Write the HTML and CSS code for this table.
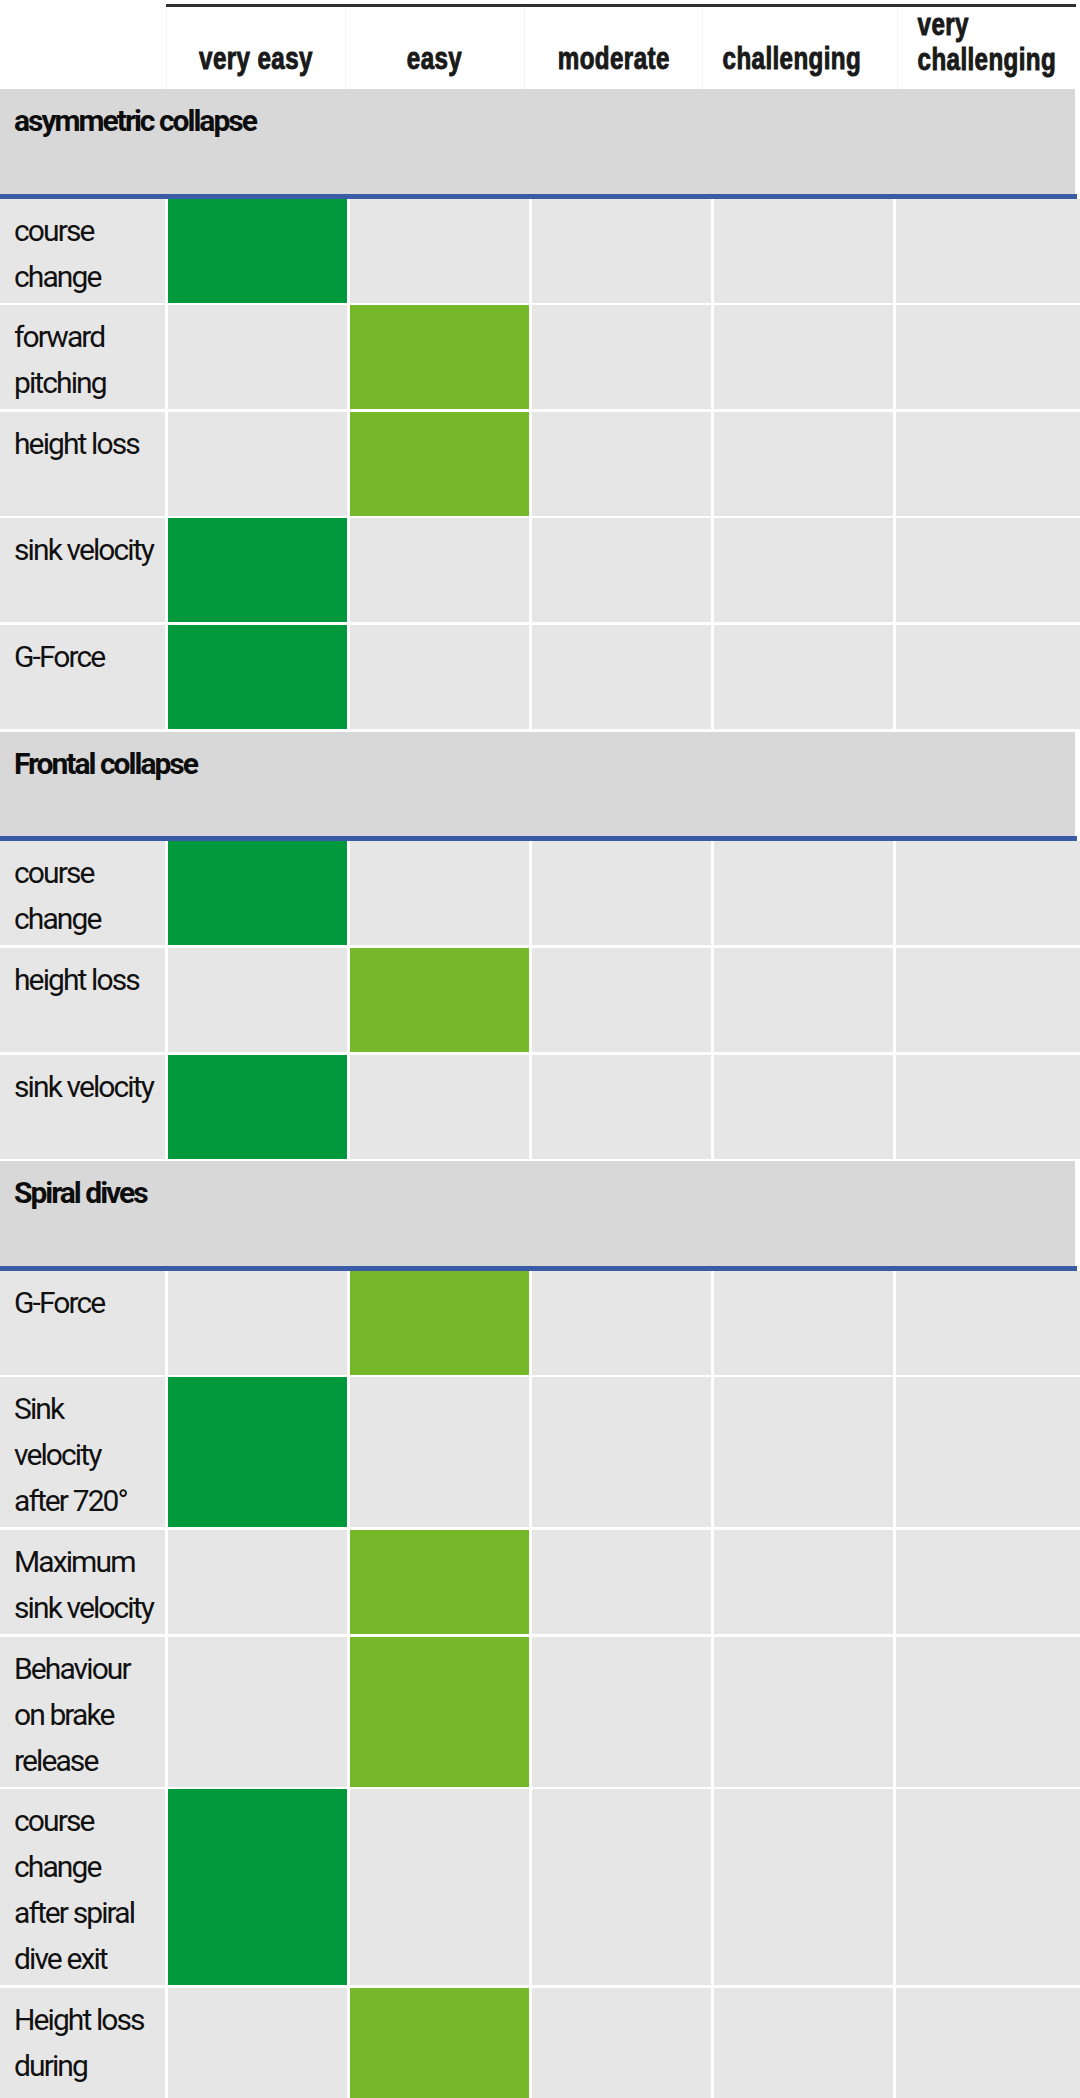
FILE: index.html
```html
<!DOCTYPE html>
<html lang="en">
<head>
<meta charset="utf-8">
<title>Safety rating</title>
<link rel="stylesheet" href="styles.css">
</head>
<body>
<div class="chart">
  <div class="head">
    <div class="head-spacer"></div>
    <div class="head-cols">
      <div class="head-cell"><span class="head-text">very easy</span></div>
      <div class="head-cell"><span class="head-text">easy</span></div>
      <div class="head-cell"><span class="head-text">moderate</span></div>
      <div class="head-cell head-cell-shift"><span class="head-text">challenging</span></div>
      <div class="head-cell head-cell-two"><span class="head-text">very<br>challenging</span></div>
    </div>
  </div>

  <section class="group">
    <div class="group-title">asymmetric collapse</div>
    <div class="rows">
      <div class="row"><div class="label">course<br>change</div><div class="cell lvl-1"></div><div class="cell"></div><div class="cell"></div><div class="cell"></div><div class="cell"></div></div>
      <div class="row"><div class="label">forward<br>pitching</div><div class="cell"></div><div class="cell lvl-2"></div><div class="cell"></div><div class="cell"></div><div class="cell"></div></div>
      <div class="row"><div class="label">height loss</div><div class="cell"></div><div class="cell lvl-2"></div><div class="cell"></div><div class="cell"></div><div class="cell"></div></div>
      <div class="row"><div class="label">sink velocity</div><div class="cell lvl-1"></div><div class="cell"></div><div class="cell"></div><div class="cell"></div><div class="cell"></div></div>
      <div class="row"><div class="label">G-Force</div><div class="cell lvl-1"></div><div class="cell"></div><div class="cell"></div><div class="cell"></div><div class="cell"></div></div>
    </div>
  </section>

  <section class="group">
    <div class="group-title">Frontal collapse</div>
    <div class="rows">
      <div class="row"><div class="label">course<br>change</div><div class="cell lvl-1"></div><div class="cell"></div><div class="cell"></div><div class="cell"></div><div class="cell"></div></div>
      <div class="row"><div class="label">height loss</div><div class="cell"></div><div class="cell lvl-2"></div><div class="cell"></div><div class="cell"></div><div class="cell"></div></div>
      <div class="row"><div class="label">sink velocity</div><div class="cell lvl-1"></div><div class="cell"></div><div class="cell"></div><div class="cell"></div><div class="cell"></div></div>
    </div>
  </section>

  <section class="group">
    <div class="group-title">Spiral dives</div>
    <div class="rows">
      <div class="row"><div class="label">G-Force</div><div class="cell"></div><div class="cell lvl-2"></div><div class="cell"></div><div class="cell"></div><div class="cell"></div></div>
      <div class="row"><div class="label">Sink<br>velocity<br>after 720°</div><div class="cell lvl-1"></div><div class="cell"></div><div class="cell"></div><div class="cell"></div><div class="cell"></div></div>
      <div class="row"><div class="label">Maximum<br>sink velocity</div><div class="cell"></div><div class="cell lvl-2"></div><div class="cell"></div><div class="cell"></div><div class="cell"></div></div>
      <div class="row"><div class="label">Behaviour<br>on brake<br>release</div><div class="cell"></div><div class="cell lvl-2"></div><div class="cell"></div><div class="cell"></div><div class="cell"></div></div>
      <div class="row"><div class="label">course<br>change<br>after spiral<br>dive exit</div><div class="cell lvl-1"></div><div class="cell"></div><div class="cell"></div><div class="cell"></div><div class="cell"></div></div>
      <div class="row row-tall"><div class="label">Height loss<br>during</div><div class="cell"></div><div class="cell lvl-2"></div><div class="cell"></div><div class="cell"></div><div class="cell"></div></div>
    </div>
  </section>
</div>
</body>
</html>
```

FILE: styles.css
```css
html, body {
  margin: 0;
  padding: 0;
  background: #ffffff;
}

body {
  font-family: Roboto, "Liberation Sans", sans-serif;
  color: #111111;
}

.chart {
  width: 1080px;
  display: flex;
  flex-direction: column;
}

/* ---------- column header ---------- */
.head {
  display: flex;
  height: 89px;
}

.head-spacer {
  width: 166px;
  flex: none;
}

.head-cols {
  flex: 1;
  margin-top: 4px;
  margin-right: 4px;
  border-top: 3px solid #303030;
  display: grid;
  grid-template-columns: repeat(5, 1fr);
}

.head-cell {
  display: flex;
  align-items: flex-end;
  justify-content: center;
  padding-bottom: 15px;
  border-left: 1px solid #f3f3f3;
}

.head-cell-shift {
  padding-right: 16px;
}

.head-cell-two {
  padding-bottom: 12px;
}

.head-text {
  display: inline-block;
  font-family: "Liberation Sans", Arial, sans-serif;
  font-weight: 700;
  font-size: 31px;
  line-height: 30px;
  letter-spacing: 0.5px;
  color: #1a1a1a;
  -webkit-text-stroke: 0.8px #1a1a1a;
  text-shadow: 0 0 1px rgba(0, 0, 0, 0.45);
  white-space: nowrap;
  transform: scaleX(0.78);
  transform-origin: center bottom;
}

.head-cell-two .head-text {
  line-height: 35px;
}

/* ---------- groups ---------- */
.group + .group {
  margin-top: 2.67px;
}

.group-title {
  box-sizing: border-box;
  min-height: 109.5px;
  margin-right: 3px;
  padding: 9px 0 3px 14px;
  background: #d9d8d9;
  border-bottom: 5.5px solid #3a5ca6;
  box-shadow: inset -2px 0 0 #ffffff;
  font-size: 30px;
  line-height: 46px;
  font-weight: 700;
  letter-spacing: -2px;
  color: #0d0d0d;
  white-space: nowrap;
}

.rows {
  display: flex;
  flex-direction: column;
  gap: 2.67px;
}

.row {
  display: grid;
  grid-template-columns: 165px repeat(4, 179.33px) 1fr;
  column-gap: 2.67px;
  min-height: 104px;
}

.row-tall {
  min-height: 150px;
}

.label {
  box-sizing: border-box;
  padding: 9px 0 3px 14px;
  background: #e7e6e7;
  font-size: 30px;
  line-height: 46px;
  letter-spacing: -1.9px;
  color: #111111;
  white-space: nowrap;
}

.cell {
  background: #e7e6e7;
}

.lvl-1 {
  background: #009a3d;
}

.lvl-2 {
  background: #76b82a;
}
```
